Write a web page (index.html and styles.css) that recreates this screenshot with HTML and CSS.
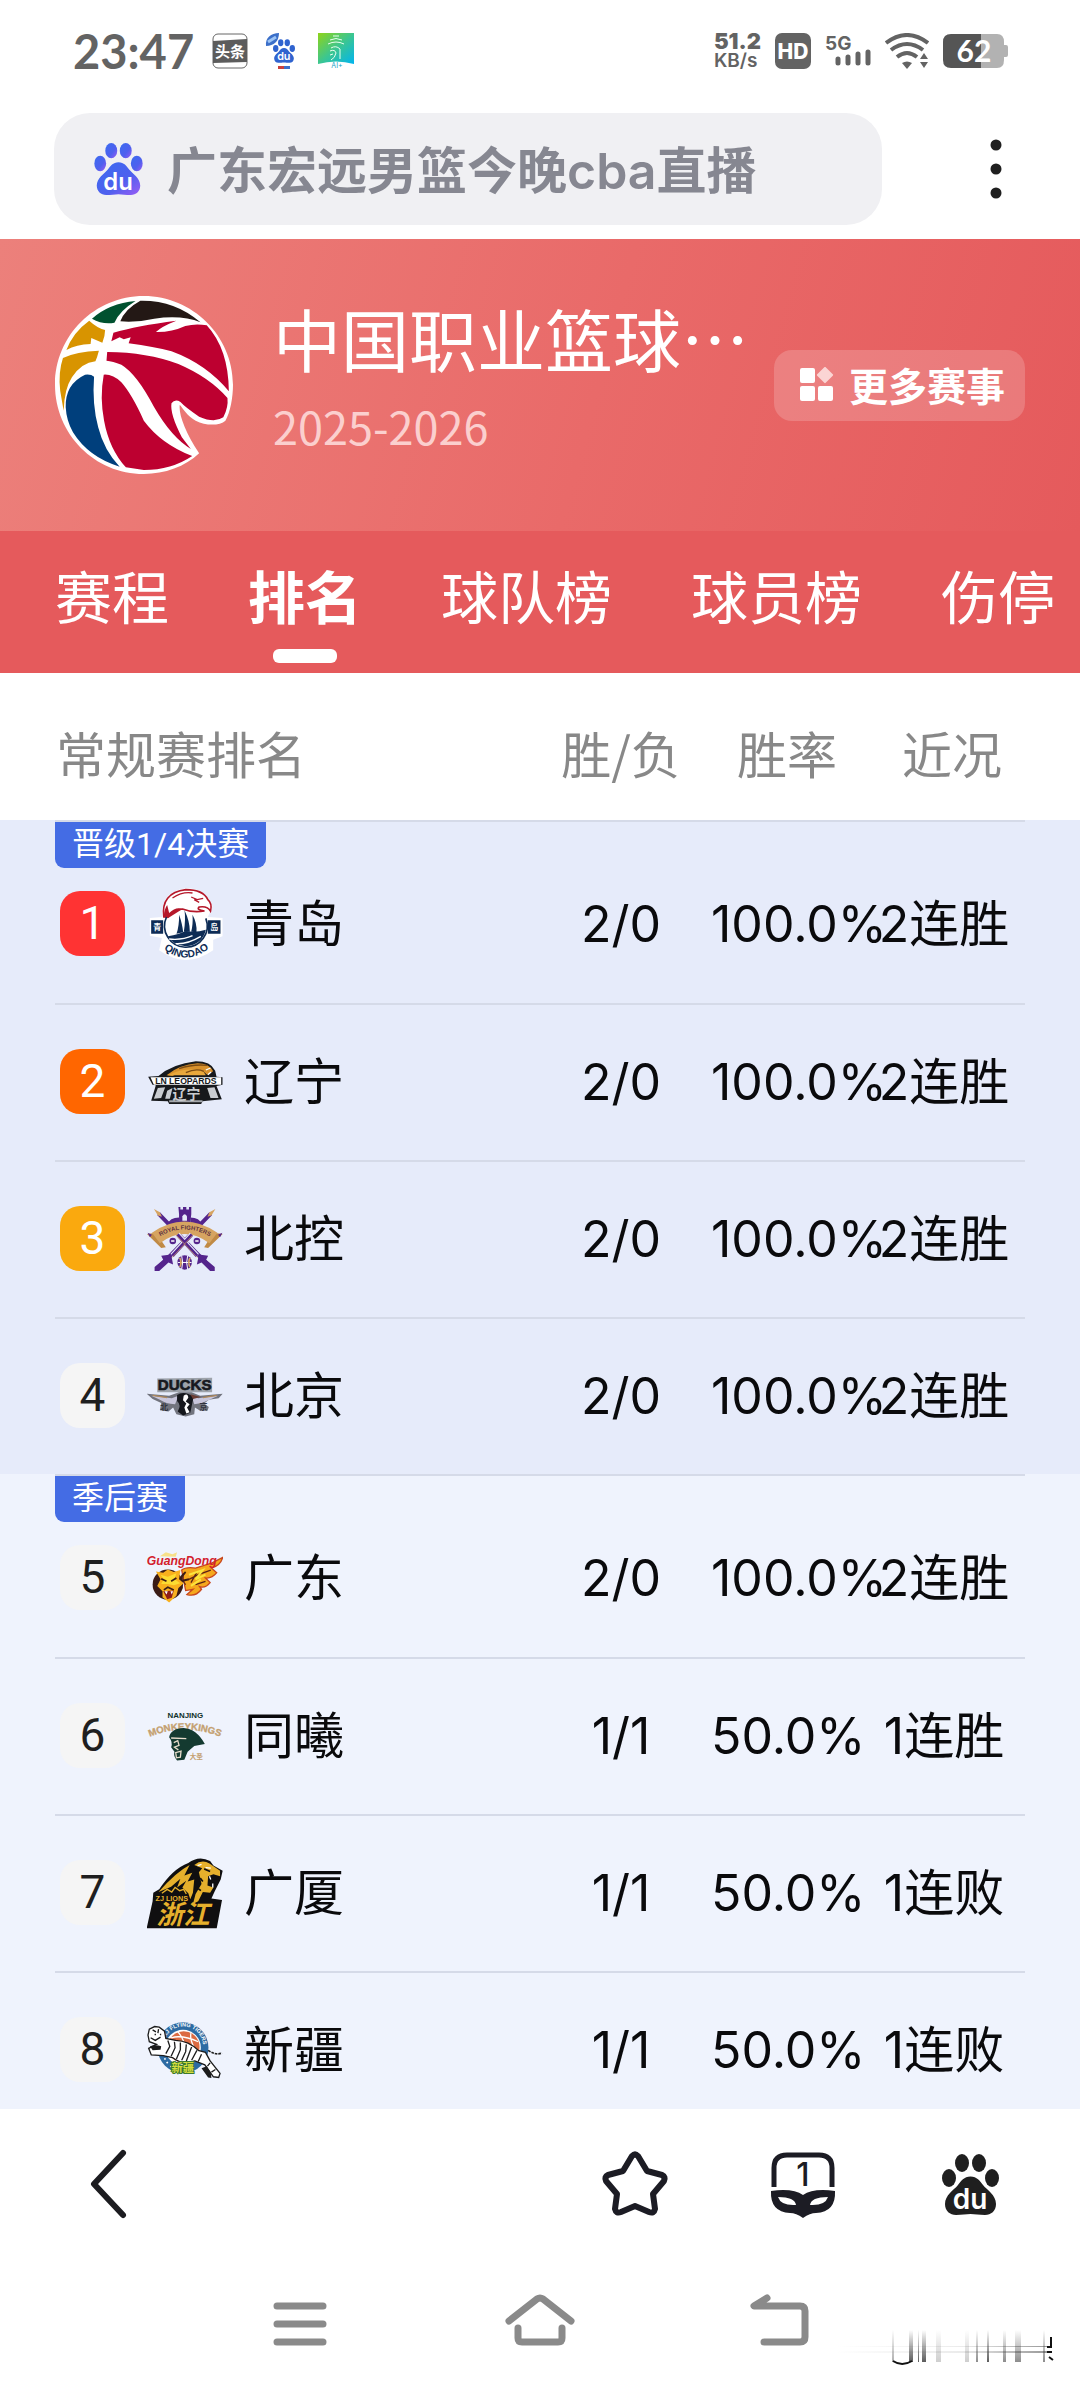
FILE: index.html
```html
<!DOCTYPE html>
<html lang="zh-CN">
<head>
    <meta charset="UTF-8">
    <meta name="viewport" content="width=device-width, initial-scale=1.0">
    <title>中国职业篮球联赛 排名</title>
    <link rel="stylesheet" href="styles.css">
</head>
<body>
    <!-- Shared paw shape -->
    <svg class="defs" aria-hidden="true">
        <defs>
            <linearGradient id="pawGradient" x1="0" y1="0" x2="1" y2="1">
                <stop offset="0" stop-color="#3a6cf0"/>
                <stop offset="0.6" stop-color="#4f60ee"/>
                <stop offset="1" stop-color="#9a5cf5"/>
            </linearGradient>
            <symbol id="paw" viewBox="0 0 57 61">
                <ellipse cx="7" cy="24" rx="7" ry="9"/>
                <ellipse cx="20" cy="9" rx="7" ry="9"/>
                <ellipse cx="37" cy="9" rx="7" ry="9"/>
                <ellipse cx="50" cy="24" rx="7" ry="9"/>
                <path d="M28.500 22.500C35 22.500 38 27 41 31C45 36 54 41 54 50C54 57 49 61 43 61C37 61 33 60 28.500 60C24 60 20 61 14 61C8 61 3 57 3 50C3 41 12 36 16 31C19 27 22 22.500 28.500 22.500Z"/>
                <text class="paw-text" x="28" y="55" text-anchor="middle">du</text>
            </symbol>
        </defs>
    </svg>

    <div class="status-bar">
        <span class="time">23:47</span>
        <svg class="app-icon" viewBox="0 0 36 36">
            <rect x="1" y="1" width="34" height="34" rx="5" fill="#fff" stroke="#666"/>
            <path d="M1 8L35 6V29L1 30Z" fill="#5c5c5c"/>
            <text x="18" y="24" text-anchor="middle" class="toutiao-text">头条</text>
        </svg>
        <svg class="app-icon" viewBox="0 0 36 36">
            <path d="M1 13C0 5 6 0 14 0C14 8 9 13 1 13Z" fill="#3b6fc9"/>
            <path d="M3 9L11 4" stroke="#9cc4f5" stroke-width="3"/>
            <use href="#paw" x="8" y="6" width="22" height="24" fill="#2f63cf"/>
            <rect x="13" y="33" width="6" height="3" fill="#c9403c"/>
            <rect x="19" y="33" width="6" height="3" fill="#3b6fc9"/>
        </svg>
        <svg class="app-icon" viewBox="0 0 36 36">
            <defs>
                <linearGradient id="aiGradient" x1="0" y1="0" x2="1" y2="1">
                    <stop offset="0" stop-color="#8fd418"/>
                    <stop offset="0.5" stop-color="#3cc690"/>
                    <stop offset="1" stop-color="#00b4f0"/>
                </linearGradient>
            </defs>
            <path d="M0 0H36V31Q18 26 0 31Z" fill="url(#aiGradient)"/>
            <path d="M15 3H21M12 7Q18 4 24 7M10 11Q18 7 26 11M13 15Q18 12 22 16V26M12 18Q17 16 18 20Q17 25 13 27M12 22L15 21" fill="none" stroke="#e8fff0"/>
            <text x="19" y="35" text-anchor="middle" class="ai-text">AI+</text>
        </svg>
        <div class="status-right">
            <div class="speed"><b>51.2</b><span>KB/s</span></div>
            <svg width="36" height="36" viewBox="0 0 36 36">
                <rect width="36" height="36" rx="7" fill="#636363"/>
                <text x="18" y="26" text-anchor="middle" class="hd-text">HD</text>
            </svg>
            <svg width="46" height="36" viewBox="0 0 46 36">
                <text x="0" y="17" class="g-text">5G</text>
                <path d="M13 26V30M23 24V30M33 21V30M43 19V30" stroke="#636363" stroke-width="5" stroke-linecap="round"/>
            </svg>
            <svg width="44" height="36" viewBox="0 0 44 36">
                <g fill="none" stroke="#636363" stroke-width="4">
                    <path d="M1 10Q22 -6 43 10"/>
                    <path d="M6 17Q22 5 38 17"/>
                    <path d="M12 24Q22 16 32 24"/>
                </g>
                <path d="M17 30Q22 27 27 30L22 36Z" fill="#636363"/>
                <path d="M32 26L39 17L46 26Z" fill="#fff"/>
                <path d="M35 26L39 20L43 26ZM35 29H43L39 35Z" fill="#636363"/>
            </svg>
            <svg width="65" height="34" viewBox="0 0 65 34">
                <path d="M8 0H54Q61 0 61 8V11H63Q65 11 65 13V21Q65 23 63 23H61V26Q61 34 54 34H8Z" fill="#b2b2b2"/>
                <path d="M8 0H38V34H8Q0 34 0 26V8Q0 0 8 0Z" fill="#555"/>
                <text x="31" y="28" text-anchor="middle" class="battery-text">62</text>
            </svg>
        </div>
    </div>

    <div class="search-bar">
        <label class="search-box">
            <svg class="search-logo" viewBox="0 0 57 61" aria-hidden="true">
                <use href="#paw" width="57" height="61" fill="url(#pawGradient)"/>
            </svg>
            <input type="text" value="广东宏远男篮今晚cba直播" aria-label="搜索">
        </label>
        <button class="more-btn" aria-label="菜单">
            <svg width="12" height="60" viewBox="0 0 12 60" fill="#1f1f1f">
                <circle cx="6" cy="6" r="5.500"/>
                <circle cx="6" cy="30" r="5.500"/>
                <circle cx="6" cy="54" r="5.500"/>
            </svg>
        </button>
    </div>

    <header class="hero">
        <svg class="league-logo" viewBox="163 166 515 534" preserveAspectRatio="none" role="img" aria-label="CBA">
            <path d="M420 166C560 166 678 285 678 432C678 470 670 515 656 540C640 555 600 556 570 540C545 525 535 505 524 492C520 520 540 575 580 638C540 678 480 700 420 700C278 700 163 580 163 432C163 285 278 166 420 166Z" fill="#fff"/>
            <path d="M270 234Q320 188 396 181Q350 210 335 246Q300 252 270 234Z" fill="#00512f"/>
            <path d="M410 180Q510 178 584 245Q530 222 450 234Q400 246 352 242Q365 205 410 180Z" fill="#231815"/>
            <path d="M196 328Q215 275 262 240Q285 262 308 268Q308 285 300 306L268 292L266 310Q225 312 196 328Z" fill="#d89400"/>
            <path d="M186 352Q225 332 290 330Q285 350 280 362Q240 366 212 410Q190 445 188 510L178 450Q172 395 186 352Z" fill="#d89400"/>
            <path d="M194 500Q192 430 250 402Q268 400 276 408Q270 490 288 560Q305 630 350 678Q260 650 215 575Q196 540 194 500Z" fill="#003f7c"/>
            <path d="M304 402Q330 400 355 425Q385 460 420 540Q470 610 560 646Q500 688 420 688L368 680Q320 625 305 540Q292 470 304 402Z" fill="#bd0030"/>
            <path d="M332 276Q400 255 514 240Q470 258 455 274Q500 275 540 256Q570 248 602 254Q665 325 666 452Q600 370 500 332Q450 318 376 308L382 290L362 296L350 290L326 302Z" fill="#bd0030"/>
            <path d="M314 334Q430 335 520 370Q610 410 662 472Q665 500 650 530Q625 548 580 528Q540 500 526 484Q510 474 500 488Q495 520 530 590L556 625Q500 590 450 500Q400 400 355 372Q330 362 312 360Z" fill="#bd0030"/>
        </svg>
        <div class="league-info">
            <h1>中国职业篮球…</h1>
            <p>2025-2026</p>
        </div>
        <button class="more-events">
            <svg width="34" height="34" viewBox="0 0 34 34" fill="#fff">
                <rect y="1" width="15" height="15" rx="2"/>
                <rect y="19" width="15" height="15" rx="2"/>
                <rect x="18" y="19" width="15" height="15" rx="2"/>
                <rect x="19" y="2" width="12" height="12" rx="1" fill="#fbd5d4" transform="rotate(45 25 8)"/>
            </svg>
            更多赛事
        </button>
    </header>

    <nav class="tabs">
        <a href="#schedule">赛程</a>
        <a href="#rank" class="active">排名</a>
        <a href="#teams">球队榜</a>
        <a href="#players">球员榜</a>
        <a href="#injury">伤停</a>
    </nav>

    <main class="ranking">
        <table>
            <thead>
                <tr>
                    <th class="col-team">常规赛排名</th>
                    <th class="col-record">胜/负</th>
                    <th class="col-rate">胜率</th>
                    <th class="col-recent">近况</th>
                </tr>
            </thead>
            <tbody class="group-quarter">
                <tr class="group-first">
                    <td>
                        <span class="group-tag">晋级1/4决赛</span>
                        <div class="team">
                            <span class="rank rank-1">1</span>
                            <svg class="team-logo" viewBox="427 619 221 228">
                                <path d="M470 690Q475 635 540 626Q600 625 620 680L606 712L650 715V770L622 780L622 812Q540 870 460 812L468 775L432 768V715L470 712Z" fill="#fff"/>
                                <path d="M474 712Q464 640 540 630Q592 630 606 660Q620 672 614 694Q605 678 580 682Q570 690 596 694Q560 700 530 688Q500 690 486 712Z" fill="#fff" stroke="#b5182a" stroke-width="5"/>
                                <path d="M474 712Q474 690 484 676L490 700Q510 680 530 688L486 716Z" fill="#b5182a"/>
                                <path d="M500 655Q530 635 560 640M556 652L574 660L592 656M565 660L580 668" fill="none" stroke="#b5182a" stroke-width="4"/>
                                <path d="M482 712A64 64 0 1 0 600 716" fill="none" stroke="#0e2c55" stroke-width="5"/>
                                <path d="M512 762Q520 740 520 705Q530 735 532 758ZM534 756Q540 720 536 692Q552 725 552 756ZM556 756Q562 735 560 705Q574 730 572 758Z" fill="#0e2c55"/>
                                <path d="M486 770Q520 764 540 754Q570 760 600 750Q590 795 540 800Q500 796 486 770Z" fill="#0e2c55"/>
                                <path d="M490 778Q530 782 560 768M510 792Q545 794 585 770" fill="none" stroke="#fff" stroke-width="4"/>
                                <path d="M436 722H472V762H436ZM606 722H644V762H606Z" fill="#0e2c55"/>
                                <text class="logo-text" x="454" y="750" font-size="24" fill="#fff" text-anchor="middle">青</text>
                                <text class="logo-text" x="625" y="750" font-size="24" fill="#fff" text-anchor="middle">岛</text>
                                <path id="qingdaoArc" d="M452 788Q540 880 632 786" fill="none"/>
                                <text class="logo-text" font-size="31" fill="#0e2c55"><textPath href="#qingdaoArc" startOffset="50%" text-anchor="middle">QINGDAO</textPath></text>
                            </svg>
                            <span class="team-name">青岛</span>
                        </div>
                    </td>
                    <td class="num">2/0</td>
                    <td class="num">100.0%</td>
                    <td class="num recent">2连胜</td>
                </tr>
                <tr>
                    <td>
                        <div class="team">
                            <span class="rank rank-2">2</span>
                            <svg class="team-logo" viewBox="427 1090 221 228">
                                <path d="M458 1186Q500 1150 570 1142Q615 1142 628 1170L632 1188L650 1190V1212L632 1216L648 1256L590 1262L586 1270H490L486 1262L436 1260L450 1214L440 1212L427 1188Z" fill="#17191c"/>
                                <path d="M482 1184Q520 1152 575 1148Q610 1148 622 1172L604 1182L590 1170Q540 1165 500 1186Z" fill="#d8912c"/>
                                <path d="M486 1184Q530 1160 590 1168L600 1184Z" fill="#e9a83c"/>
                                <path d="M520 1164Q560 1150 604 1154M540 1176Q570 1162 594 1172" fill="none" stroke="#7d4c13" stroke-width="4"/>
                                <path d="M600 1168L614 1162M606 1182L616 1174" stroke="#fff" stroke-width="4"/>
                                <path d="M434 1190H646V1212H444Z" fill="#fff"/>
                                <text class="logo-text" x="540" y="1210" font-size="26" fill="#17191c" text-anchor="middle">LN LEOPARDS</text>
                                <path d="M456 1222L478 1220L466 1252L444 1254ZM604 1222L626 1220L638 1252L614 1252ZM484 1230L500 1222L492 1254L478 1254Z" fill="#c9ccd0"/>
                                <path d="M490 1262H590" stroke="#a5a9ad" stroke-width="6"/>
                                <text class="logo-text" x="542" y="1256" font-size="42" fill="#c9ccd0" text-anchor="middle">辽宁</text>
                            </svg>
                            <span class="team-name">辽宁</span>
                        </div>
                    </td>
                    <td class="num">2/0</td>
                    <td class="num">100.0%</td>
                    <td class="num recent">2连胜</td>
                </tr>
                <tr>
                    <td>
                        <div class="team">
                            <span class="rank rank-3">3</span>
                            <svg class="team-logo" viewBox="323 151 230 228">
                                <path d="M358 188L512 348M516 188L362 348" stroke="#54248c" stroke-width="12"/>
                                <path d="M344 174L362 184L368 198L356 194ZM530 174L512 184L506 198L518 194Z" fill="#d6a461"/>
                                <path d="M418 168H424V176H432V168H442V176H450V168H457V190L454 214H420V190Z" fill="#54248c"/>
                                <path d="M384 222Q392 200 420 200V224ZM454 200Q482 200 490 222L454 224Z" fill="#54248c"/>
                                <path d="M430 210V196Q437 184 444 196V210Z" fill="#e7ebfa"/>
                                <path d="M323 250L350 246L380 290L366 292ZM552 250L524 246L496 290L508 292Z" fill="#c08a45"/>
                                <path d="M338 246Q436 178 536 246L512 278Q436 222 362 278Z" fill="#d6a461"/>
                                <path d="M325 246L338 252L332 260ZM551 246L538 252L544 260Z" fill="#54248c"/>
                                <path id="royalArc" d="M358 260Q436 212 518 260" fill="none"/>
                                <text class="logo-text" font-size="18" fill="#5c3040"><textPath href="#royalArc" startOffset="50%" text-anchor="middle">ROYAL FIGHTERS</textPath></text>
                                <path d="M415 252L474 316M459 252L400 316" stroke="#e7ebfa" stroke-width="17"/>
                                <path d="M415 252L474 316M459 252L400 316" stroke="#54248c" stroke-width="10"/>
                                <path d="M412 254L476 322M461 254L398 322" stroke="#d6a461" stroke-width="2"/>
                                <circle cx="401" cy="271" r="10" fill="#54248c"/>
                                <circle cx="474" cy="271" r="10" fill="#54248c"/>
                                <path d="M396 271H406M469 271H479" stroke="#fff" stroke-width="5"/>
                                <path d="M366 316L396 312L402 342L388 336L360 362L346 362V350L372 328ZM508 316L480 312L474 342L488 336L514 362L528 362V350L502 328Z" fill="#54248c"/>
                                <circle cx="437" cy="336" r="22" fill="#54248c"/>
                                <path d="M428 316Q434 336 428 356M446 316Q440 336 446 356M416 336H458" fill="none" stroke="#fff" stroke-width="3"/>
                                <path d="M422 322Q430 336 422 350" fill="none" stroke="#d6a461" stroke-width="5"/>
                                <path d="M453 322Q446 336 453 350" fill="none" stroke="#d6a461" stroke-width="5"/>
                            </svg>
                            <span class="team-name">北控</span>
                        </div>
                    </td>
                    <td class="num">2/0</td>
                    <td class="num">100.0%</td>
                    <td class="num recent">2连胜</td>
                </tr>
                <tr>
                    <td>
                        <div class="team">
                            <span class="rank">4</span>
                            <svg class="team-logo" viewBox="323 621 230 228">
                                <path d="M354 682L520 680V724H354Z" fill="#9da2aa"/>
                                <text class="logo-text" x="437" y="718" font-size="46" fill="#17191f" stroke="#17191f" stroke-width="2" text-anchor="middle">DUCKS</text>
                                <path d="M322 728L390 734L420 724H458L484 734L552 728L540 742L510 746L496 758L510 768L506 780L484 780L468 770L466 790L440 797L412 790L402 770L388 782L362 778L366 756L340 744Z" fill="#72747e"/>
                                <path d="M336 734L398 742L418 734L408 760Q380 758 362 746ZM538 734L478 742L458 734L466 760Q490 758 512 746Z" fill="#c8c6dc"/>
                                <path d="M340 733L384 740M534 733L492 740" stroke="#b08a5c" stroke-width="4"/>
                                <path d="M414 732Q436 718 464 738L454 786L432 794L416 782Q428 762 414 750Z" fill="#14161c"/>
                                <path d="M434 734Q446 724 448 740L440 752L452 760L444 770L452 784L442 788L436 770L442 758L432 748Z" fill="#fff"/>
                                <path d="M454 730L486 738L462 744Z" fill="#6b3d34"/>
                                <text class="logo-text" x="375" y="778" font-size="24" fill="#30323c" text-anchor="middle">北</text>
                                <text class="logo-text" x="494" y="778" font-size="24" fill="#30323c" text-anchor="middle">京</text>
                            </svg>
                            <span class="team-name">北京</span>
                        </div>
                    </td>
                    <td class="num">2/0</td>
                    <td class="num">100.0%</td>
                    <td class="num recent">2连胜</td>
                </tr>
            </tbody>
            <tbody class="group-playoff">
                <tr class="group-first">
                    <td>
                        <span class="group-tag">季后赛</span>
                        <div class="team">
                            <span class="rank">5</span>
                            <svg class="team-logo" viewBox="323 1172 230 228">
                                <path d="M362 1220L380 1208L400 1214L414 1208L410 1222Z" fill="#f7e08a"/>
                                <path d="M428 1262Q440 1252 470 1256L520 1240L552 1224Q546 1248 518 1256L534 1270Q520 1288 500 1286L514 1300Q500 1318 482 1312L488 1320Q470 1344 444 1336L462 1320L440 1324Z" fill="#f5a81c" stroke="#c8481e" stroke-width="4"/>
                                <path d="M436 1272Q424 1290 440 1306M450 1290L478 1276L516 1262M470 1306L500 1296M474 1268L456 1300" fill="none" stroke="#5a2416" stroke-width="4"/>
                                <path d="M450 1276L492 1262L470 1290L500 1276M456 1310L486 1290" fill="none" stroke="#fbe53c" stroke-width="6"/>
                                <circle cx="386" cy="1306" r="46" fill="#3a1c16"/>
                                <path d="M440 1268Q416 1286 428 1318M450 1290L424 1296" fill="none" stroke="#3a1c16" stroke-width="6"/>
                                <path d="M350 1266L372 1270L386 1260L404 1268L424 1262L420 1290L434 1302L418 1316L412 1340L390 1360L370 1344V1326L354 1310L364 1290Z" fill="#f8b01d"/>
                                <path d="M364 1276L386 1282L412 1272L406 1290L424 1302L404 1308L386 1304L366 1304L374 1290Z" fill="#fbdc32"/>
                                <path d="M366 1288L382 1296M396 1296L412 1286M374 1322L386 1314L404 1322" fill="none" stroke="#3a1c16" stroke-width="5"/>
                                <path d="M372 1326L404 1324L398 1346L384 1350Z" fill="#8e1e18"/>
                                <path d="M376 1326L382 1336L386 1326ZM394 1326L398 1336L402 1326Z" fill="#fff"/>
                                <text class="logo-text logo-italic" x="428" y="1248" font-size="37" fill="#d3202c" text-anchor="middle">GuangDong</text>
                            </svg>
                            <span class="team-name">广东</span>
                        </div>
                    </td>
                    <td class="num">2/0</td>
                    <td class="num">100.0%</td>
                    <td class="num recent">2连胜</td>
                </tr>
                <tr>
                    <td>
                        <div class="team">
                            <span class="rank">6</span>
                            <svg class="team-logo" viewBox="323 202 230 228">
                                <text class="logo-text" x="439" y="262" font-size="24" fill="#10312b" text-anchor="middle">NANJING</text>
                                <path id="monkeyArc" d="M323 322Q436 272 553 322" fill="none"/>
                                <text class="logo-text" font-size="29" fill="#c4a06f" stroke="#c4a06f"><textPath href="#monkeyArc" startOffset="50%" text-anchor="middle">MONKEYKINGS</textPath></text>
                                <path d="M390 320Q394 294 434 292Q472 294 498 340L466 346L446 364L436 388L414 390Q402 378 406 364L396 350Q402 336 390 320Z" fill="#143a30"/>
                                <path d="M396 322L442 324M404 336L416 330L420 344L406 350L418 358M410 366L426 362L424 380L412 382Z" fill="none" stroke="#e6dccb" stroke-width="4"/>
                                <text class="logo-text" x="472" y="386" font-size="20" fill="#c4a06f" text-anchor="middle">大圣</text>
                            </svg>
                            <span class="team-name">同曦</span>
                        </div>
                    </td>
                    <td class="num">1/1</td>
                    <td class="num">50.0%</td>
                    <td class="num recent">1连胜</td>
                </tr>
                <tr>
                    <td>
                        <div class="team">
                            <span class="rank">7</span>
                            <svg class="team-logo" viewBox="323 673 230 228">
                                <path d="M342 786L360 776Q400 714 448 696Q480 672 514 690L524 704L552 720L546 746L528 782L518 804L550 808L534 894H322L340 812Z" fill="#100f10"/>
                                <path d="M358 784Q410 724 452 702L436 734L460 726L446 752L466 746L462 786L454 806L448 788L430 770L442 750L414 770L424 744L396 768Z" fill="#e6b02c"/>
                                <path d="M466 702Q490 684 512 698L544 720V736L524 730L508 736L506 764L524 770L514 786L492 784L478 812L462 820L470 790L488 760L480 724L490 712Z" fill="#e6b02c"/>
                                <path d="M476 704L488 700M500 710L516 712M512 736L516 746M522 770V758" stroke="#fff" stroke-width="4"/>
                                <path d="M496 714L514 722M484 742L492 752M478 774L486 780" stroke="#100f10" stroke-width="5"/>
                                <path d="M368 788L384 776L398 784L408 770L422 780L434 776L442 790" fill="none" stroke="#e6b02c" stroke-width="4"/>
                                <text class="logo-text" x="398" y="812" font-size="22" fill="#e6b02c" text-anchor="middle">ZJ LIONS</text>
                                <text class="logo-text logo-italic" x="432" y="882" font-size="80" fill="#e6b02c" text-anchor="middle">浙江</text>
                            </svg>
                            <span class="team-name">广厦</span>
                        </div>
                    </td>
                    <td class="num">1/1</td>
                    <td class="num">50.0%</td>
                    <td class="num recent">1连败</td>
                </tr>
                <tr>
                    <td>
                        <div class="team">
                            <span class="rank">8</span>
                            <svg class="team-logo" viewBox="323 1143 230 228">
                                <circle cx="432" cy="1250" r="77" fill="#2d6ba3"/>
                                <circle cx="432" cy="1250" r="54" fill="#fff"/>
                                <circle cx="434" cy="1248" r="48" fill="#dc6b42"/>
                                <path d="M396 1220Q430 1210 478 1232M416 1202Q440 1225 444 1290M456 1206Q452 1225 466 1250M390 1244Q420 1230 480 1262" fill="none" stroke="#fff" stroke-width="4"/>
                                <path id="tigerArc" d="M374 1234A60 60 0 0 1 492 1258" fill="none"/>
                                <text class="logo-text" font-size="17" fill="#fff"><textPath href="#tigerArc" startOffset="50%" text-anchor="middle">XJ FLYING TIGERS</textPath></text>
                                <path d="M497 1266L492 1290M376 1282L386 1298M394 1306L402 1312" stroke="#fff" stroke-width="5" stroke-dasharray="5 8"/>
                                <path d="M326 1212L330 1194L346 1186L360 1188L376 1200L380 1222L410 1228Q450 1230 478 1258L500 1264L514 1290L544 1328L540 1340L524 1338L498 1302L468 1290Q430 1304 400 1280L372 1274L336 1272L328 1252L352 1240L330 1232Z" fill="#fff" stroke="#1c1c1c" stroke-width="4"/>
                                <path d="M386 1228L392 1246L380 1268M406 1232L408 1250L396 1276M424 1234L424 1256L412 1284M442 1240L440 1262L428 1288M458 1248L442 1290M474 1258L458 1288M488 1270L478 1292M514 1296L506 1306M530 1316L518 1324M340 1196L350 1202M358 1194L356 1206M334 1220L348 1228L364 1218M346 1210H350M362 1210H366" fill="none" stroke="#1c1c1c" stroke-width="4"/>
                                <path d="M332 1246Q350 1240 366 1246L364 1256L340 1258ZM488 1312L504 1306L516 1326L518 1342L508 1340Z" fill="#1c1c1c"/>
                                <path d="M508 1258Q530 1274 550 1266" fill="none" stroke="#1c1c1c" stroke-width="5" stroke-dasharray="8 3"/>
                                <text class="logo-text" x="431" y="1324" font-size="34" fill="#d6dc3c" stroke="#3c7a30" stroke-width="6" paint-order="stroke" text-anchor="middle">新疆</text>
                            </svg>
                            <span class="team-name">新疆</span>
                        </div>
                    </td>
                    <td class="num">1/1</td>
                    <td class="num">50.0%</td>
                    <td class="num recent">1连败</td>
                </tr>
            </tbody>
        </table>
    </main>

    <footer class="toolbar">
        <button class="icon-btn back-btn" aria-label="返回">
            <svg viewBox="0 0 72 72" fill="none" stroke="#1c1c20" stroke-width="6" stroke-linecap="round" stroke-linejoin="round">
                <path d="M50 5L21 36L50 67"/>
            </svg>
        </button>
        <button class="icon-btn" aria-label="收藏">
            <svg viewBox="0 0 72 72" fill="none" stroke="#1c1c24" stroke-width="6" stroke-linejoin="round">
                <path d="M33 8Q36 5 39 8L48 23L63 27Q67 29 65 33L54 46L56 61Q55 66 50 64L36 58L22 64Q17 66 16 61L18 46L7 33Q5 29 9 27L24 23Z"/>
            </svg>
        </button>
        <button class="icon-btn" aria-label="窗口">
            <svg viewBox="0 0 72 72">
                <path d="M7 39V20Q7 7 20 7H52Q65 7 65 20V39" fill="none" stroke="#1c1c24" stroke-width="5"/>
                <text x="36" y="38" text-anchor="middle" class="window-count">1</text>
                <path d="M4 43Q26 40 36 47Q46 40 68 43Q69 64 49 65Q43 65 36 70Q29 65 23 65Q3 64 4 43ZM11 49Q14 58 29 57Q28 49 11 49ZM61 49Q44 49 43 57Q58 58 61 49Z" fill="#1c1c24" fill-rule="evenodd"/>
            </svg>
        </button>
        <button class="icon-btn" aria-label="首页">
            <svg viewBox="0 0 72 72">
                <use href="#paw" x="7" y="6" width="57" height="61" fill="#1f1f1f"/>
            </svg>
        </button>
    </footer>

    <div class="system-nav">
        <button class="icon-btn" aria-label="最近任务">
            <svg viewBox="0 0 72 72" fill="none" stroke="#8a8a8a" stroke-width="7" stroke-linecap="round">
                <path d="M13 18H59M13 36H59M13 54H59"/>
            </svg>
        </button>
        <button class="icon-btn" aria-label="主屏幕">
            <svg viewBox="0 0 72 72" fill="none" stroke="#8a8a8a" stroke-width="7" stroke-linecap="round" stroke-linejoin="round">
                <path d="M5 33L33 11Q36 9 39 11L67 33"/>
                <path d="M14 40V50Q14 54 18 54H54Q58 54 58 50V40"/>
            </svg>
        </button>
        <button class="icon-btn" aria-label="后退">
            <svg viewBox="0 0 72 72" fill="none" stroke="#8a8a8a" stroke-width="7" stroke-linecap="round" stroke-linejoin="round">
                <path d="M23 10L10 18H56Q61 18 61 23V49Q61 54 56 54H20"/>
            </svg>
        </button>
        <svg class="watermark" viewBox="0 0 230 40" aria-hidden="true">
            <defs>
                <linearGradient id="fadeDown" x1="0" y1="0" x2="0" y2="1">
                    <stop offset="0" stop-color="#333" stop-opacity="0"/>
                    <stop offset="1" stop-color="#333" stop-opacity="0.800"/>
                </linearGradient>
                <linearGradient id="fadeRight" x1="0" y1="0" x2="1" y2="0">
                    <stop offset="0" stop-color="#333" stop-opacity="0"/>
                    <stop offset="0.6" stop-color="#333" stop-opacity="0.100"/>
                    <stop offset="1" stop-color="#333" stop-opacity="0.500"/>
                </linearGradient>
            </defs>
            <g fill="url(#fadeDown)">
                <rect x="66" y="2" width="2" height="32" opacity="0.500"/>
                <rect x="83" y="2" width="4" height="32"/>
                <rect x="92" y="2" width="1" height="32"/>
                <rect x="96" y="2" width="4" height="32"/>
                <rect x="110" y="2" width="5" height="32" opacity="0.300"/>
                <rect x="139" y="2" width="4" height="32" opacity="0.300"/>
                <rect x="150" y="2" width="2" height="32" opacity="0.700"/>
                <rect x="161" y="2" width="2" height="32"/>
                <rect x="177" y="2" width="3" height="32" opacity="0.700"/>
                <rect x="189" y="2" width="6" height="32" opacity="0.700"/>
                <rect x="217" y="2" width="2" height="32" opacity="0.700"/>
            </g>
            <rect x="10" y="18" width="212" height="1" fill="url(#fadeRight)"/>
            <rect x="10" y="23" width="212" height="2" fill="url(#fadeRight)"/>
            <path d="M67 33Q76 39 86 33" fill="none" stroke="#111" stroke-width="2"/>
            <path d="M225 9V19H221M221 24H226M223 29L227 32" fill="none" stroke="#111" stroke-width="2"/>
        </svg>
    </div>
</body>
</html>
```

FILE: styles.css
```css
html, body {
    margin: 0;
    padding: 0;
    height: 100%;
}
body {
    display: flex;
    flex-direction: column;
    box-sizing: border-box;
    background-color: #fff;
    color: #0a0a0c;
    font-family: "Noto Sans CJK SC", sans-serif;
    overflow: hidden;
}
button {
    padding: 0;
    border: none;
    background: none;
    font-family: inherit;
    cursor: pointer;
}
svg {
    display: block;
}
.defs {
    position: absolute;
    width: 0;
    height: 0;
}
.paw-text {
    font: 600 28px Inter, sans-serif;
    fill: #fff;
}

/* Status bar */
.status-bar {
    display: flex;
    align-items: center;
    flex-shrink: 0;
    height: 102px;
    padding: 0 72px 0 73px;
    color: #636363;
}
.time {
    margin-right: 18px;
    font: bold 47px/60px Lato, sans-serif;
}
.app-icon {
    width: 36px;
    height: 36px;
    margin-right: 17px;
}
.toutiao-text {
    font: bold 15px "Noto Sans CJK SC", sans-serif;
    fill: #fff;
}
.ai-text {
    font: 7px Inter, sans-serif;
    fill: #1aa5c8;
}
.status-right {
    display: flex;
    align-items: center;
    gap: 14px;
    margin-left: auto;
}
.speed {
    display: flex;
    flex-direction: column;
    font: 600 19px/19px Inter, sans-serif;
}
.speed b {
    font-size: 22px;
}
.hd-text {
    font: 800 21px Inter, sans-serif;
    fill: #fff;
}
.g-text {
    font: bold 19px Inter, sans-serif;
    fill: #636363;
}
.battery-text {
    font: bold 30px Lato, sans-serif;
    fill: #fff;
}

/* Search */
.search-bar {
    display: flex;
    align-items: center;
    flex-shrink: 0;
    padding: 11px 54px 14px;
}
.search-box {
    display: flex;
    align-items: center;
    flex: 1;
    min-width: 0;
    height: 112px;
    padding-left: 40px;
    border-radius: 36px;
    background-color: #f0f0f3;
    box-sizing: border-box;
}
.search-logo {
    flex-shrink: 0;
    width: 49px;
    height: 52px;
    margin-right: 24px;
}
.search-box input {
    flex: 1;
    min-width: 0;
    padding: 0 0 4px;
    border: none;
    outline: none;
    background: none;
    color: #868791;
    font: 600 50px Inter, "Noto Sans CJK SC", sans-serif;
}
.more-btn {
    display: flex;
    flex-shrink: 0;
    justify-content: center;
    width: 60px;
    margin-left: 84px;
}

/* League header */
.hero {
    display: flex;
    align-items: center;
    flex-shrink: 0;
    height: 292px;
    box-sizing: border-box;
    padding: 0 55px;
    background: linear-gradient(105deg, #ec807b, #e96a69 55%, #e55a5c);
    color: #fff;
}
.league-logo {
    width: 178px;
    height: 178px;
    margin-right: 40px;
}
.league-info {
    flex: 1;
    white-space: nowrap;
}
.league-info h1 {
    margin: 0 0 8px;
    font-size: 68px;
    font-weight: normal;
    line-height: 88px;
}
.league-info p {
    margin: 0 0 14px;
    color: #fbcfce;
    font-size: 45px;
    line-height: 72px;
}
.more-events {
    display: flex;
    align-items: center;
    gap: 15px;
    height: 71px;
    padding: 0 20px 3px 26px;
    border-radius: 18px;
    background-color: rgba(255, 255, 255, 0.18);
    color: #fff;
    font-size: 39px;
    font-weight: bold;
}

/* Tabs */
.tabs {
    display: flex;
    flex-shrink: 0;
    gap: 79px;
    height: 142px;
    padding-left: 55px;
    background-color: #e55a5c;
    white-space: nowrap;
    overflow: hidden;
}
.tabs a {
    position: relative;
    color: #fff;
    font-size: 57px;
    line-height: 126px;
    text-decoration: none;
}
.tabs .active {
    font-weight: bold;
}
.tabs .active::after {
    content: "";
    position: absolute;
    left: 50%;
    bottom: 10px;
    width: 64px;
    height: 14px;
    margin-left: -32px;
    border-radius: 6px;
    background-color: #fff;
}

/* Ranking table */
.ranking {
    flex: 1;
    min-height: 0;
    overflow: hidden;
}
table {
    width: 100%;
    table-layout: fixed;
    border-collapse: collapse;
}
th, td {
    padding: 0;
    white-space: nowrap;
    font-size: 50px;
    font-weight: normal;
}
th {
    height: 137px;
    padding-top: 10px;
    color: #888;
    text-align: center;
}
th.col-team {
    padding-left: 56px;
    text-align: left;
}
.col-record {
    width: 180px;
}
.col-rate {
    width: 152px;
}
.col-recent {
    width: 146px;
    padding-left: 16px;
    padding-right: 55px;
}
tbody tr {
    height: 157px;
    background: linear-gradient(#d5dae8, #d5dae8) center top / calc(100% - 110px) 2px no-repeat;
}
.group-quarter {
    background-color: #e6ebfa;
}
.group-playoff {
    background-color: #eff3fd;
}
.group-first {
    height: 183px;
}
.group-first td {
    position: relative;
    padding-top: 24px;
}
.group-tag {
    position: absolute;
    top: 2px;
    left: 55px;
    padding: 0 17px 2px;
    border-radius: 0 0 9px 9px;
    background-color: #446ce4;
    color: #fff;
    font-family: Roboto, "Noto Sans CJK SC", sans-serif;
    font-size: 32px;
    line-height: 44px;
}
.team {
    display: flex;
    align-items: center;
    padding-left: 60px;
}
.team-name {
    padding-bottom: 8px;
}
.rank {
    width: 65px;
    height: 65px;
    border-radius: 20px;
    background-color: #f5f5f5;
    color: #1f1f1f;
    font-family: Roboto, sans-serif;
    font-size: 46px;
    line-height: 65px;
    text-align: center;
}
.rank-1, .rank-2, .rank-3 {
    color: #fff;
}
.rank-1 {
    background-color: #ff3333;
}
.rank-2 {
    background-color: #ff6600;
}
.rank-3 {
    background-color: #faa90e;
}
.team-logo {
    width: 76px;
    height: 76px;
    margin: 0 21px 0 22px;
}
.logo-text {
    font-family: "Liberation Sans", "Noto Sans CJK SC", sans-serif;
    font-weight: bold;
}
.logo-italic {
    font-style: italic;
}
.num {
    font-family: Inter, "Noto Sans CJK SC", sans-serif;
    text-align: center;
}
td.recent {
    padding-right: 55px;
    padding-bottom: 7px;
}

/* Bottom bars */
.toolbar {
    display: flex;
    align-items: center;
    flex-shrink: 0;
    gap: 96px;
    height: 150px;
    padding: 0 73px;
}
.icon-btn {
    width: 72px;
    height: 72px;
}
.back-btn {
    margin-right: auto;
}
.window-count {
    font: 500 32px Inter, sans-serif;
    fill: #1c1c24;
}
.system-nav {
    position: relative;
    display: flex;
    align-items: center;
    justify-content: center;
    flex-shrink: 0;
    gap: 168px;
    height: 129px;
}
.watermark {
    position: absolute;
    right: 24px;
    bottom: 20px;
    width: 230px;
    height: 40px;
}
```
